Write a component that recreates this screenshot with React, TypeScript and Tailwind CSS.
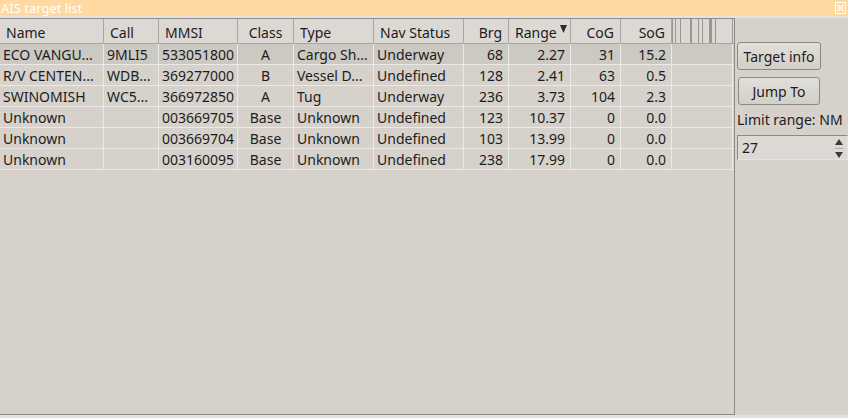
import React from "react";

const cols = [
  { w: 104, h: "Name", ha: "left", da: "left" },
  { w: 55, h: "Call", ha: "left", da: "left" },
  { w: 79, h: "MMSI", ha: "left", da: "left" },
  { w: 56, h: "Class", ha: "center", da: "center" },
  { w: 80, h: "Type", ha: "left", da: "left" },
  { w: 90, h: "Nav Status", ha: "left", da: "left" },
  { w: 45, h: "Brg", ha: "right", da: "right" },
  { w: 62, h: "Range", ha: "left", da: "right" },
  { w: 50, h: "CoG", ha: "right", da: "right" },
  { w: 51, h: "SoG", ha: "right", da: "right" },
];

const rows = [
  ["ECO VANGU...", "9MLI5", "533051800", "A", "Cargo Sh...", "Underway", "68", "2.27", "31", "15.2"],
  ["R/V CENTEN...", "WDB...", "369277000", "B", "Vessel D...", "Undefined", "128", "2.41", "63", "0.5"],
  ["SWINOMISH", "WC5...", "366972850", "A", "Tug", "Underway", "236", "3.73", "104", "2.3"],
  ["Unknown", "", "003669705", "Base", "Unknown", "Undefined", "123", "10.37", "0", "0.0"],
  ["Unknown", "", "003669704", "Base", "Unknown", "Undefined", "103", "13.99", "0", "0.0"],
  ["Unknown", "", "003160095", "Base", "Unknown", "Undefined", "238", "17.99", "0", "0.0"],
];

const gridCols = "grid grid-cols-[104px_55px_79px_56px_80px_90px_45px_62px_50px_51px_61px]";

function HeaderCell({ c }: { c: (typeof cols)[number] }) {
  if (c.h === "Range") {
    return (
      <div className="flex justify-between border-r border-[#a9a6a1] pl-[6px] pr-[3px]">
        <span className="self-center pt-[3px]">Range</span>
        <svg width="7" height="9" viewBox="0 0 7 9" className="mt-[6px]">
          <polygon points="0,0 7,0 3.5,8" fill="#2a2a2a" />
        </svg>
      </div>
    );
  }
  const al =
    c.ha === "left" ? "justify-start pl-[6px]" : c.ha === "right" ? "justify-end pr-[6px]" : "justify-center";
  return <div className={`flex items-center pt-[3px] border-r border-[#a9a6a1] ${al}`}>{c.h}</div>;
}

export default function App() {
  return (
    <div
      className="w-[848px] h-[418px] bg-[#d6d2cb] flex flex-col text-[#1c1c1c] overflow-hidden"
      style={{ fontFamily: '"Noto Sans", "DejaVu Sans", sans-serif' }}
    >
      {/* title bar */}
      <div className="h-[16px] bg-[#ffd99f] flex items-center justify-between pl-[1px] pr-[2px] text-white text-[13px] leading-[16px]">
        <span>AIS target list</span>
        <svg width="11" height="12" viewBox="0 0 11 12">
          <rect x="0.5" y="0.5" width="10" height="11" fill="none" stroke="#ffffff" strokeWidth="1" />
          <path d="M2.5 3 L8.5 9 M8.5 3 L2.5 9" stroke="#ffffff" strokeWidth="1.6" />
        </svg>
      </div>
      <div className="h-[2px] bg-[#e7e4df]" />

      <div className="flex h-[397px]">
        {/* table frame */}
        <div className="w-[735px] h-full border-t border-r border-b border-[#8e8b86] flex flex-col text-[14px] leading-none">
          {/* header */}
          <div className={`${gridCols} h-[25px] bg-[#dcd9d4] border-b border-[#a9a6a1]`}>
            {cols.map((c) => (
              <HeaderCell key={c.h} c={c} />
            ))}
            <div className="relative">
              <svg width="61" height="24" viewBox="0 0 61 24" className="block">
                <g fill="#9b9893">
                  <rect x="0" y="0" width="1" height="24" />
                  <rect x="3" y="0" width="1" height="24" />
                  <rect x="8" y="0" width="1" height="24" />
                  <rect x="18" y="0" width="2" height="24" />
                  <rect x="26" y="0" width="1" height="24" />
                  <rect x="30" y="0" width="1" height="24" />
                  <rect x="37" y="0" width="3" height="24" />
                  <rect x="43" y="0" width="1" height="24" />
                  <rect x="60" y="0" width="1" height="24" />
                </g>
              </svg>
            </div>
          </div>
          {/* rows */}
          {rows.map((r, i) => (
            <div
              key={i}
              className={`${gridCols} h-[21px] border-b border-[#ebe9e5] ${i === 0 ? "bg-[#ccc9c3]" : ""}`}
            >
              {r.map((v, j) => {
                const a = cols[j].da;
                const al =
                  a === "left" ? "justify-start pl-[3px]" : a === "right" ? "justify-end pr-[5px]" : "justify-center";
                return (
                  <div key={j} className={`flex items-center pt-[2px] whitespace-nowrap border-r border-[#ebe9e5] ${al}`}>
                    {v}
                  </div>
                );
              })}
              <div className="border-r border-[#ebe9e5]" />
            </div>
          ))}
        </div>

        {/* side panel */}
        <div className="flex-1 flex flex-col pl-[2px] pt-[24px] text-[14px] leading-none">
          <button className="w-[84px] h-[28px] rounded-[3px] border border-[#8c8882] bg-gradient-to-b from-[#e2dfda] to-[#d2cec8] flex items-center justify-center pt-[1px] text-[#1c1c1c]">
            Target info
          </button>
          <button className="ml-[1px] mt-[7px] w-[82px] h-[28px] rounded-[3px] border border-[#8c8882] bg-gradient-to-b from-[#e2dfda] to-[#d2cec8] flex items-center justify-center pt-[1px] text-[#1c1c1c]">
            Jump To
          </button>
          <div className="mt-[7px] h-[15px] flex items-center whitespace-nowrap pt-[1px]">Limit range: NM</div>
          <div className="mt-[8px] w-[111px] h-[25px] border-t border-l border-[#8c8882] border-r border-b border-r-[#e6e3de] border-b-[#e6e3de] bg-[#dcd9d4] flex items-center justify-between pl-[4px] pt-[1px]">
            <span>27</span>
            <div className="w-[14px] h-full flex flex-col items-center justify-center gap-[3px] pr-[2px]">
              <svg width="8" height="6" viewBox="0 0 8 6">
                <polygon points="0,6 8,6 4,0" fill="#3a3a3a" />
              </svg>
              <div className="w-[9px] h-[1px] bg-[#b5b1ab]" />
              <svg width="8" height="6" viewBox="0 0 8 6">
                <polygon points="0,0 8,0 4,6" fill="#3a3a3a" />
              </svg>
            </div>
          </div>
        </div>
      </div>
      <div className="flex-1 bg-[#e2e0dd]" />
    </div>
  );
}
